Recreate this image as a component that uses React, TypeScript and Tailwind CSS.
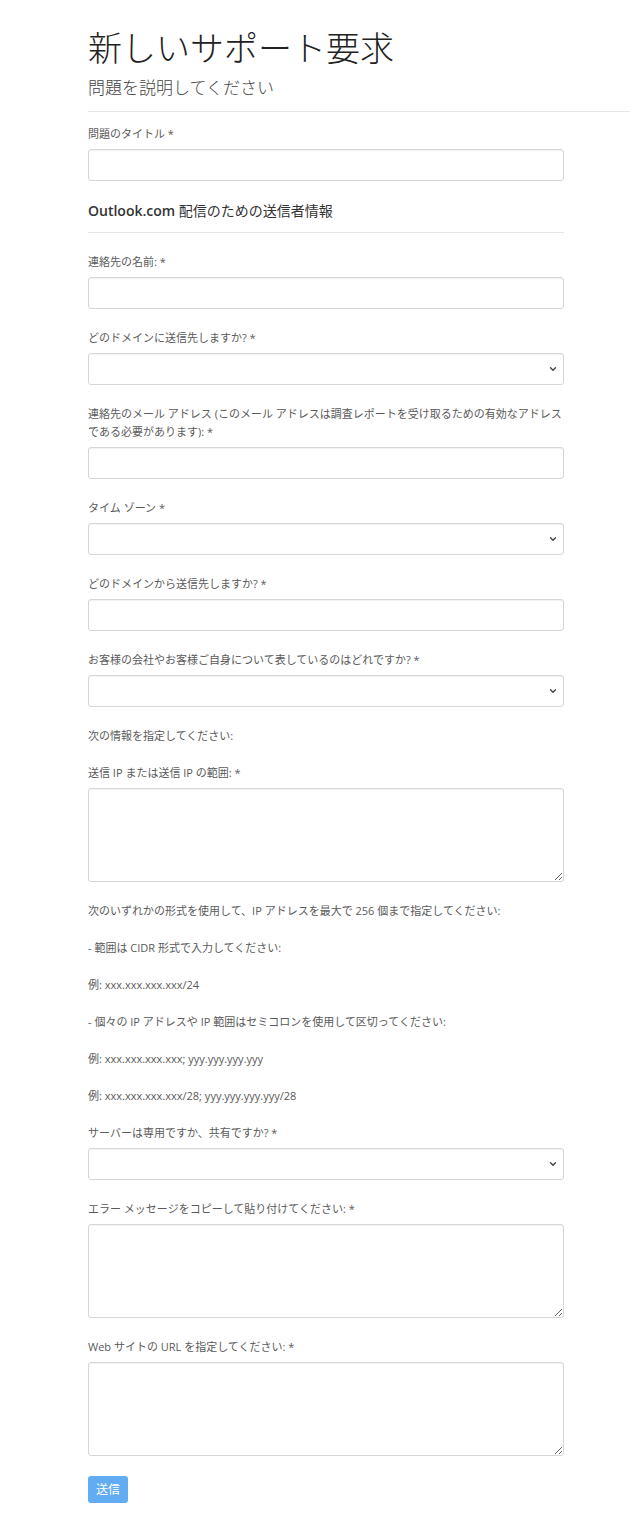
import React from 'react';

const font = { fontFamily: '"Open Sans", "Noto Sans CJK JP", sans-serif' };

const Label = ({ children }: { children: React.ReactNode }) => (
  <label className="block text-[11px] leading-[18px] text-[#5a5a5a] mb-[6px]">{children}</label>
);

const TextInput = () => (
  <input
    type="text"
    className="block w-full h-[32px] rounded-[3px] border border-[#d6d6d6] bg-white shadow-[inset_0_1px_1px_rgba(0,0,0,0.05)] px-2 text-[12px] outline-none"
  />
);

const Select = () => (
  <div className="relative">
    <select className="block w-full h-[32px] appearance-none rounded-[3px] border border-[#d6d6d6] bg-white shadow-[inset_0_1px_1px_rgba(0,0,0,0.05)] px-2 text-[12px] outline-none">
      <option></option>
    </select>
    <svg
      className="pointer-events-none absolute right-[7px] top-[13px] w-[8px] h-[6px]"
      viewBox="0 0 8 6"
      fill="none"
      stroke="#444"
      strokeWidth="1.4"
      strokeLinecap="round"
      strokeLinejoin="round"
    >
      <path d="M1.5 1.8l2.5 2.5 2.5-2.5" />
    </svg>
  </div>
);

const TextArea = () => (
  <textarea className="block w-full h-[94px] rounded-[3px] border border-[#d6d6d6] bg-white shadow-[inset_0_1px_1px_rgba(0,0,0,0.05)] px-2 py-1 text-[12px] outline-none" />
);

const Field = ({ label, children }: { label: React.ReactNode; children: React.ReactNode }) => (
  <div className="mb-[20px]">
    <Label>{label}</Label>
    {children}
  </div>
);

const Note = ({ children }: { children: React.ReactNode }) => (
  <p className="text-[11px] leading-[18px] text-[#5a5a5a] mb-[19px]">{children}</p>
);

export default function App() {
  return (
    <div className="min-h-screen bg-white" style={font}>
      {/* page header */}
      <div className="ml-[88px] pt-[27px] pb-[11px] border-b border-[#e6e6e6]">
        <h1 className="text-[34px] leading-[42px] font-light text-[#222]">新しいサポート要求</h1>
        <p className="mt-[7px] text-[17px] leading-[24px] font-light text-[#444]">問題を説明してください</p>
      </div>

      <form className="ml-[88px] w-[476px] pt-[13px] pb-[30px]">
        <Field label="問題のタイトル *">
          <TextInput />
        </Field>

        <div className="pb-[11px] mb-[20px] border-b border-[#e6e6e6]">
          <h2 className="text-[14px] leading-[20px] text-[#333]">
            <span className="font-semibold">Outlook.com</span> 配信のための送信者情報
          </h2>
        </div>

        <Field label="連絡先の名前: *">
          <TextInput />
        </Field>

        <Field label="どのドメインに送信先しますか? *">
          <Select />
        </Field>

        <Field label="連絡先のメール アドレス (このメール アドレスは調査レポートを受け取るための有効なアドレスである必要があります): *">
          <TextInput />
        </Field>

        <Field label="タイム ゾーン *">
          <Select />
        </Field>

        <Field label="どのドメインから送信先しますか? *">
          <TextInput />
        </Field>

        <Field label="お客様の会社やお客様ご自身について表しているのはどれですか? *">
          <Select />
        </Field>

        <Note>次の情報を指定してください:</Note>

        <Field label="送信 IP または送信 IP の範囲: *">
          <TextArea />
        </Field>

        <Note>次のいずれかの形式を使用して、IP アドレスを最大で 256 個まで指定してください:</Note>
        <Note>- 範囲は CIDR 形式で入力してください:</Note>
        <Note>例: xxx.xxx.xxx.xxx/24</Note>
        <Note>- 個々の IP アドレスや IP 範囲はセミコロンを使用して区切ってください:</Note>
        <Note>例: xxx.xxx.xxx.xxx; yyy.yyy.yyy.yyy</Note>
        <Note>例: xxx.xxx.xxx.xxx/28; yyy.yyy.yyy.yyy/28</Note>

        <Field label="サーバーは専用ですか、共有ですか? *">
          <Select />
        </Field>

        <Field label="エラー メッセージをコピーして貼り付けてください: *">
          <TextArea />
        </Field>

        <Field label="Web サイトの URL を指定してください: *">
          <TextArea />
        </Field>

        <button
          type="button"
          className="h-[27px] px-[8px] rounded-[3px] bg-[#62acf3] text-white text-[12px] leading-[27px]"
        >
          送信
        </button>
      </form>
    </div>
  );
}
